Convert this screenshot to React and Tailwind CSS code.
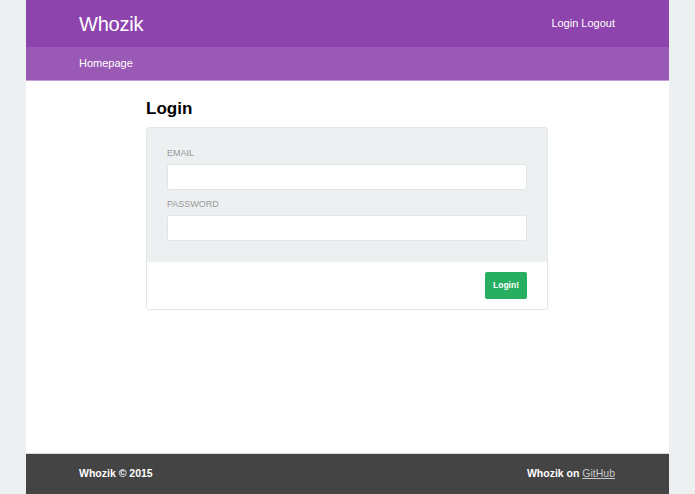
export default function App() {
  return (
    <div className="min-h-screen bg-[#ecf0f1] font-['Liberation_Sans',Arial,sans-serif]">
      <div className="mx-[26px] flex h-[494px] flex-col bg-white">
        {/* Top bar */}
        <header className="flex h-[47px] items-center justify-between bg-[#8e44ad] pl-[53px] pr-[54px] text-white">
          <span className="text-[20px] leading-none tracking-[-0.2px]">Whozik</span>
          <span className="text-[11px] leading-none">Login Logout</span>
        </header>
        <nav className="flex h-[34px] items-center border-b border-[#c99bdb] bg-[#9b59b6] pl-[53px] text-[11px] text-white">
          Homepage
        </nav>

        {/* Content */}
        <main className="flex-1 pl-[120px] pt-[17px]">
          <h1 className="text-[17px] font-bold leading-[22px] text-black">Login</h1>
          <div className="mt-[7px] w-[402px] overflow-hidden rounded-[3px] border border-[#e3e6e8]">
            <div className="bg-[#ecf0f1] px-[20px] pb-[21px] pt-[19px]">
              <label className="block text-[9px] uppercase leading-[12px] text-[#999999]">Email</label>
              <input className="mt-[5px] block h-[26px] w-full rounded-[2px] border border-[#e1e5e6] bg-white outline-none" />
              <label className="mt-[8px] block text-[9px] uppercase leading-[12px] text-[#999999]">Password</label>
              <input type="password" className="mt-[5px] block h-[26px] w-full rounded-[2px] border border-[#e1e5e6] bg-white outline-none" />
            </div>
            <div className="flex justify-end bg-white px-[20px] py-[10px]">
              <button className="h-[27px] w-[42px] rounded-[2px] bg-[#27ae60] text-[8.5px] font-bold text-white">
                Login!
              </button>
            </div>
          </div>
        </main>

        {/* Footer */}
        <footer className="flex h-[41px] items-center justify-between border-t border-[#dcdcdc] bg-[#444444] pl-[53px] pr-[54px] text-[10.5px] font-bold text-white">
          <span>Whozik © 2015</span>
          <span>
            Whozik on <a href="#" className="font-normal text-[#c8c8c8] underline">GitHub</a>
          </span>
        </footer>
      </div>
    </div>
  );
}
